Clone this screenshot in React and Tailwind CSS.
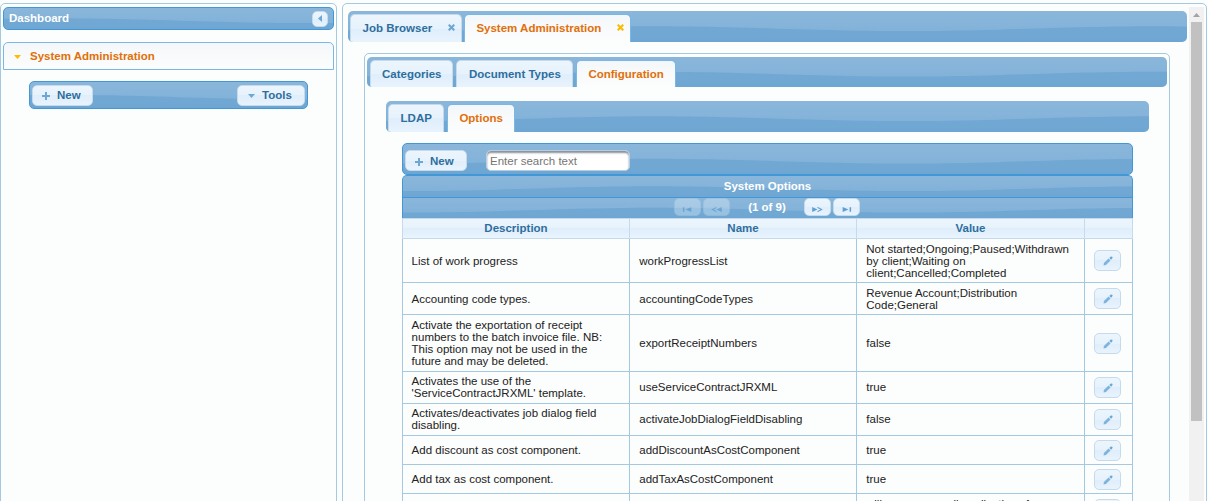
import React from "react";

const SPAN = 1250;

function wavePath() {
  let d = `M${-SPAN} 600`;
  for (let x = -SPAN; x <= SPAN; x += 10) {
    const y = 2.2 + 2.4 * Math.sin((2 * Math.PI * (x - 12)) / 500);
    d += ` L${x} ${y.toFixed(2)}`;
  }
  return d + ` L${SPAN} 600 Z`;
}

const WAVE = wavePath();

function Wave() {
  return (
    <svg className="pointer-events-none absolute inset-0 h-full w-full" aria-hidden="true">
      <svg x="50%" y="50%" overflow="visible">
        <path d={WAVE} fill="#5c9ccc" fillOpacity="0.45" />
      </svg>
    </svg>
  );
}

function Bar({ className = "", children }) {
  return (
    <div className={`relative flex overflow-hidden bg-linear-to-b from-[#8ab6da] to-[#7fb0d9] ${className}`}>
      <Wave />
      {children}
    </div>
  );
}

const glass =
  "bg-[linear-gradient(to_bottom,#ecf5fd_0%,#e6f2fc_50%,#dfeefb_50%,#e8f3fd_100%)]";

function Button({ className = "", children }) {
  return (
    <button
      type="button"
      className={`relative flex shrink-0 items-center rounded-[5px] border border-[#c5dbec] font-bold text-[#2e6e9e] ${glass} ${className}`}
    >
      {children}
    </button>
  );
}

function PlusIcon() {
  return (
    <svg width="8" height="8" viewBox="0 0 8 8" fill="#6da8d5">
      <path d="M3 0h2v3h3v2H5v3H3V5H0V3h3z" />
    </svg>
  );
}

function DownIcon({ color }) {
  return (
    <svg className="-mt-[1px]" width="7" height="4" viewBox="0 0 7 4" fill={color}>
      <path d="M0 0h7L3.5 4z" />
    </svg>
  );
}

function CloseIcon({ color }) {
  return (
    <svg className="mb-[2px]" width="7" height="7" viewBox="0 0 7 7" stroke={color} strokeWidth="2.1">
      <path d="M0.7 0.7L6.3 6.3M6.3 0.7L0.7 6.3" />
    </svg>
  );
}

function PencilIcon() {
  return (
    <svg width="10" height="10" viewBox="0 0 10 10" fill="#6da8d5">
      <path d="M0.6 9.4L0.9 7.1L5.6 2.5L7.5 4.4L2.9 9z" opacity="0.85" />
      <path d="M6.3 2L7.5 0.8Q8.5 0 9.3 0.8Q10 1.6 9.2 2.5L8.1 3.7z" />
    </svg>
  );
}

function Tab({ label, active, closable, className = "" }) {
  const look = active
    ? "border-[#79b7e7] bg-linear-to-b from-[#f4f7f9] to-[#fcfdfd] text-[#e17009]"
    : `border-[#c5dbec] text-[#2e6e9e] ${glass}`;
  return (
    <div
      className={`relative mt-[3px] flex shrink-0 items-center justify-between rounded-t-[5px] border border-b-0 font-bold ${look} ${className}`}
    >
      <span>{label}</span>
      {closable && <CloseIcon color={active ? "#f9bd01" : "#6da8d5"} />}
    </div>
  );
}

function PageButton({ path, disabled }) {
  return (
    <Button className={`h-[18px] w-[27px] justify-center pt-[4px] ${disabled ? "opacity-35" : ""}`}>
      <svg width="11" height="7" viewBox="0 0 10 6" preserveAspectRatio="none" fill="#5f9fd0">
        <path d={path} />
      </svg>
    </Button>
  );
}

const rows = [
  ["List of work progress", "workProgressList", "Not started;Ongoing;Paused;Withdrawn by client;Waiting on client;Cancelled;Completed", "h-[44px]", ""],
  ["Accounting code types.", "accountingCodeTypes", "Revenue Account;Distribution Code;General", "h-[32px]", ""],
  ["Activate the exportation of receipt numbers to the batch invoice file. NB: This option may not be used in the future and may be deleted.", "exportReceiptNumbers", "false", "h-[57px]", ""],
  ["Activates the use of the 'ServiceContractJRXML' template.", "useServiceContractJRXML", "true", "h-[32px]", "pb-[2px]"],
  ["Activates/deactivates job dialog field disabling.", "activateJobDialogFieldDisabling", "false", "h-[32px]", "pb-[2px]"],
  ["Add discount as cost component.", "addDiscountAsCostComponent", "true", "h-[29px]", ""],
  ["Add tax as cost component.", "addTaxAsCostComponent", "true", "h-[29px]", ""],
];

const grid = "grid grid-cols-[228px_227px_228px_48px]";

function OptionsTable() {
  return (
    <div className="w-[731px]">
      <Bar className="h-[32px] items-start rounded-[5px] border border-[#4297d7] pt-[6px] pl-[2px]">
        <Button className="h-[21px] w-[62px] gap-[7px] pt-[2px] pl-[9px]">
          <PlusIcon />
          New
        </Button>
        <input
          placeholder="Enter search text"
          className="relative ml-[19px] h-[21px] w-[144px] rounded-[5px] border border-[#b5cee3] bg-white px-[3px] shadow-[inset_0_2px_2px_#8a8f98] outline-none placeholder:text-[#757575]"
        />
      </Bar>
      <Bar className="h-[22px] items-center justify-center rounded-t-[5px] border border-b-0 border-[#4297d7] font-bold text-white">
        <span className="relative">System Options</span>
      </Bar>
      <Bar className="h-[21px] items-start border border-b-0 border-[#4297d7] pl-[271px] font-bold text-white">
        <div className="relative flex items-center gap-[2px]">
          <PageButton disabled path="M0.8 1h1.4v4H0.8zM8.5 0.8v4.4L3.2 3z" />
          <PageButton disabled path="M5 0.6v1.2L2.2 3L5 4.2v1.2L0.2 3zM9.8 0.8v4.4L5 3z" />
        </div>
        <span className="relative w-[74px] text-center leading-[19px]">(1 of 9)</span>
        <div className="relative flex items-center gap-[2px]">
          <PageButton path="M0.2 0.8v4.4L5 3zM5 0.6v1.2L7.8 3L5 4.2v1.2L9.8 3z" />
          <PageButton path="M1.5 0.8v4.4L6.8 3zM7.8 1h1.4v4H7.8z" />
        </div>
      </Bar>
      <div className={`${grid} h-[21px] border-t border-b border-[#c5dbec] text-center leading-[19px] font-bold text-[#2e6e9e] ${glass}`}>
        <div className="border-r border-l border-[#c5dbec]">Description</div>
        <div className="border-r border-[#c5dbec]">Name</div>
        <div className="border-r border-[#c5dbec]">Value</div>
        <div className="border-r border-[#c5dbec]" />
      </div>
      {rows.map(([description, name, value, height, pad]) => (
        <div key={name} className={`${grid} ${height} border-b border-[#a6c9e2] leading-[12px]`}>
          <div className={`flex items-center border-r border-l border-[#a6c9e2] pr-[12px] pl-[8.6px] ${pad}`}>{description}</div>
          <div className={`flex items-center border-r border-[#a6c9e2] px-[9.3px] ${pad}`}>{name}</div>
          <div className={`flex items-center border-r border-[#a6c9e2] px-[9.3px] ${pad}`}>{value}</div>
          <div className="flex items-center border-r border-[#a6c9e2] pl-[9px]">
            <Button className="h-[21px] w-[27px] justify-center pt-[1px]">
              <PencilIcon />
            </Button>
          </div>
        </div>
      ))}
      <div className={`${grid} h-[44px] leading-[12px]`}>
        <div className="border-r border-l border-[#a6c9e2]" />
        <div className="border-r border-[#a6c9e2]" />
        <div className="border-r border-[#a6c9e2] px-[9px] pt-[4px]">will accompany all applications for</div>
        <div className="border-r border-[#a6c9e2] pt-[5px] pl-[9px]">
          <Button className="h-[21px] w-[27px] justify-center">
            <PencilIcon />
          </Button>
        </div>
      </div>
    </div>
  );
}

function Sidebar() {
  return (
    <aside className="h-[520px] w-[337px] shrink-0 rounded-t-[5px] border border-[#a6c9e2] px-[2px] pt-[3px]">
      <Bar className="h-[23px] items-center justify-between rounded-[5px] border border-[#4297d7] pr-[5px] pl-[5px] font-bold text-white">
        <span className="relative">Dashboard</span>
        <Button className="h-[16px] w-[16px] justify-center">
          <svg width="4" height="7" viewBox="0 0 4 7" fill="#6da8d5">
            <path d="M4 0v7L0 3.5z" />
          </svg>
        </Button>
      </Bar>
      <div className="mt-[12px] flex h-[28px] items-center gap-[9px] rounded-t-[5px] border border-[#79b7e7] bg-linear-to-b from-[#f4f7f9] to-[#fcfdfd] pt-[2px] pl-[10px] font-bold text-[#e17009]">
        <DownIcon color="#f9bd01" />
        System Administration
      </div>
      <Bar className="mt-[11px] ml-[26px] h-[28px] w-[279px] items-center justify-between rounded-[5px] border border-[#4297d7] px-[2px]">
        <Button className="h-[21px] w-[61px] gap-[7px] pt-[2px] pl-[9px]">
          <PlusIcon />
          New
        </Button>
        <Button className="h-[21px] w-[68px] gap-[7px] pt-[2px] pl-[10px]">
          <DownIcon color="#6da8d5" />
          Tools
        </Button>
      </Bar>
    </aside>
  );
}

export default function App() {
  return (
    <div className="flex h-[501px] w-[1208px] gap-[5px] overflow-hidden bg-[#fcfdfd] pt-[3px] font-['Liberation_Sans',Arial,sans-serif] text-[11.5px] text-[#222222]">
      <Sidebar />
      <main className="flex h-[520px] w-[865px] shrink-0 justify-between rounded-t-[5px] border border-[#a6c9e2] pt-[3px]">
        <div className="pt-[4px] pl-[5px]">
          <Bar className="h-[31px] w-[839px] gap-[2px] rounded-[5px] pl-[2px]">
            <Tab label="Job Browser" closable className="w-[112px] pr-[6px] pl-[11.6px]" />
            <Tab label="System Administration" closable active className="w-[167px] pr-[6px] pl-[11.4px]" />
          </Bar>
          <div className="mt-[11px] ml-[16px] h-[460px] w-[806px] rounded-t-[5px] border border-[#a6c9e2] pt-[3px] pl-[2px]">
            <Bar className="h-[30px] w-[800px] gap-[3px] rounded-[5px] pl-[3px]">
              <Tab label="Categories" className="w-[83px] pt-[2px] pl-[11px]" />
              <Tab label="Document Types" className="w-[117px] pt-[2px] pl-[12px]" />
              <Tab label="Configuration" active className="w-[100px] pt-[2px] pl-[11.4px]" />
            </Bar>
            <div className="pt-[14px] pl-[19px]">
              <Bar className="h-[31px] w-[763px] gap-[3px] rounded-[5px] pl-[2px]">
                <Tab label="LDAP" className="w-[56px] pl-[11.6px]" />
                <Tab label="Options" active className="w-[68px] pl-[11.4px]" />
              </Bar>
              <div className="pt-[11px] pl-[16px]">
                <OptionsTable />
              </div>
            </div>
          </div>
        </div>
        <div className="mr-[2px] flex w-[15px] flex-col items-center bg-[#f1f1f1]">
          <svg width="15" height="15" viewBox="0 0 15 15" fill="#a3a3a3">
            <path d="M4 10L7.5 6L11 10z" />
          </svg>
          <div className="h-[399px] w-[11px] bg-[#c1c1c1]" />
        </div>
      </main>
    </div>
  );
}
